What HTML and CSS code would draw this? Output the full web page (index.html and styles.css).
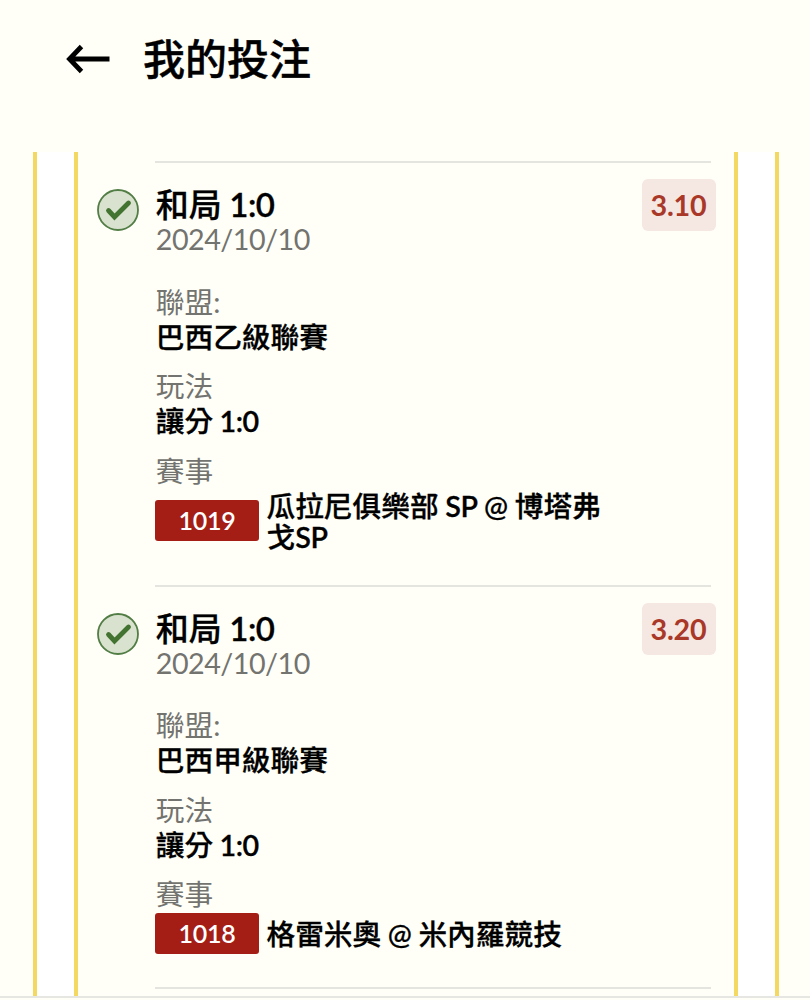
FILE: index.html
```
<!DOCTYPE html>
<html lang="zh-Hant">
<head>
<meta charset="utf-8">
<title>我的投注</title>
<link rel="stylesheet" href="styles.css">
</head>
<body>
<div class="screen">
  <header class="header">
    <svg class="back" width="46" height="32" viewBox="0 0 46 32"><path d="M43.5 16H4M15.5 3.5 3.5 16 15.5 28.5" fill="none" stroke="#000" stroke-width="4.8"/></svg>
    <h1 class="header-title">我的投注</h1>
  </header>
  <main class="outer">
    <div class="inner">
      <section class="bet">
        <svg class="status" width="42" height="42" viewBox="0 0 42 42"><circle cx="21" cy="21" r="20" fill="#d8e2ce" stroke="#527d45" stroke-width="1.8"/><path d="M11.5 21.5 17.5 28 31.5 14" fill="none" stroke="#427330" stroke-width="4.8" stroke-linecap="round"/></svg>
        <div class="details">
          <div class="pick">和局 <b class="latin">1:0</b></div>
          <div class="date">2024/10/10</div>
          <div class="field first"><div class="label">聯盟:</div><div class="value">巴西乙級聯賽</div></div>
          <div class="field"><div class="label">玩法</div><div class="value">讓分 <b class="latin">1:0</b></div></div>
          <div class="field"><div class="label">賽事</div>
            <div class="match"><span class="code">1019</span><span class="teams">瓜拉尼俱樂部 <b class="latin">SP</b> @ 博塔弗戈<b class="latin">SP</b></span></div>
          </div>
        </div>
        <div class="odds">3.10</div>
      </section>
      <section class="bet">
        <svg class="status" width="42" height="42" viewBox="0 0 42 42"><circle cx="21" cy="21" r="20" fill="#d8e2ce" stroke="#527d45" stroke-width="1.8"/><path d="M11.5 21.5 17.5 28 31.5 14" fill="none" stroke="#427330" stroke-width="4.8" stroke-linecap="round"/></svg>
        <div class="details">
          <div class="pick">和局 <b class="latin">1:0</b></div>
          <div class="date">2024/10/10</div>
          <div class="field first"><div class="label">聯盟:</div><div class="value">巴西甲級聯賽</div></div>
          <div class="field"><div class="label">玩法</div><div class="value">讓分 <b class="latin">1:0</b></div></div>
          <div class="field"><div class="label">賽事</div>
            <div class="match"><span class="code">1018</span><span class="teams">格雷米奧 @ 米內羅競技</span></div>
          </div>
        </div>
        <div class="odds">3.20</div>
      </section>
      <div class="end-rule"></div>
    </div>
  </main>
  <footer class="footer"></footer>
</div>
</body>
</html>
```
FILE: styles.css
```
* { box-sizing: border-box; }
body { margin: 0; background: #fffff8; color: #000; font-family: Lato, "Noto Sans CJK TC", sans-serif; }
.screen { height: 1000px; display: flex; flex-direction: column; overflow: hidden; }
.header { flex: none; height: 152px; padding: 34px 0 0 66px; display: flex; align-items: flex-start; }
.back { margin-top: 9px; }
.header-title { margin: 0 0 0 31px; font-size: 42px; line-height: 50px; font-weight: 500; -webkit-text-stroke: 0.4px #000; }
.outer { flex: none; height: 844px; margin: 0 31px 0 33px; padding: 0 37px; background: #fff; border: solid #f3d962; border-width: 0 4px; overflow: hidden; }
.inner { height: 100%; padding-top: 9px; background: #fffff8; border: solid #f3d962; border-width: 0 4px; }
.bet { display: flex; align-items: flex-start; margin: 0 18px 0 19px; background: linear-gradient(#e5e5df, #e5e5df) 58px 0 / 556px 2px no-repeat; }
.status { flex: none; margin-top: 28px; }
.details { width: 488px; flex: none; padding: 26px 0 33px; margin-left: 16px; }
.pick, .date, .label, .value { height: 35px; line-height: 35px; padding-left: 0.8px; white-space: nowrap; }
.pick { font-size: 33px; font-weight: 500; word-spacing: -1px; }
.date, .label, .value { font-size: 28.7px; }
.date, .label { color: #73736f; }
.date { letter-spacing: -0.5px; }
.label { font-weight: 400; }
.value { font-weight: 500; word-spacing: -1px; }
.pick, .value, .teams { -webkit-text-stroke: 0.3px #000; }
.latin { font-weight: 600; letter-spacing: -0.4px; }
.field { margin-top: 14.5px; }
.first { margin-top: 27.5px; }
.match { display: flex; align-items: center; padding-top: 1px; }
.code { flex: none; width: 104px; height: 41px; margin-right: 7.5px; border-radius: 3px; background: #a51e16; color: #fff; font-size: 25px; line-height: 41px; font-weight: 600; letter-spacing: -0.3px; text-align: center; }
.teams { width: 345px; font-size: 28.7px; line-height: 31px; font-weight: 500; word-spacing: -0.7px; padding-top: 1px; margin-bottom: -1px; }
.odds { flex: none; width: 74px; height: 52px; margin-top: 18px; margin-left: -1px; padding-right: 1px; border-radius: 6px; background: #f5e7e1; color: #a93829; font-size: 28.7px; line-height: 53px; font-weight: 700; letter-spacing: -0.2px; text-align: center; }
.end-rule { height: 2px; margin: 0 23px 0 77px; background: #e5e5df; }
.footer { height: 2px; flex: none; background: #e6e6e3; }
```
